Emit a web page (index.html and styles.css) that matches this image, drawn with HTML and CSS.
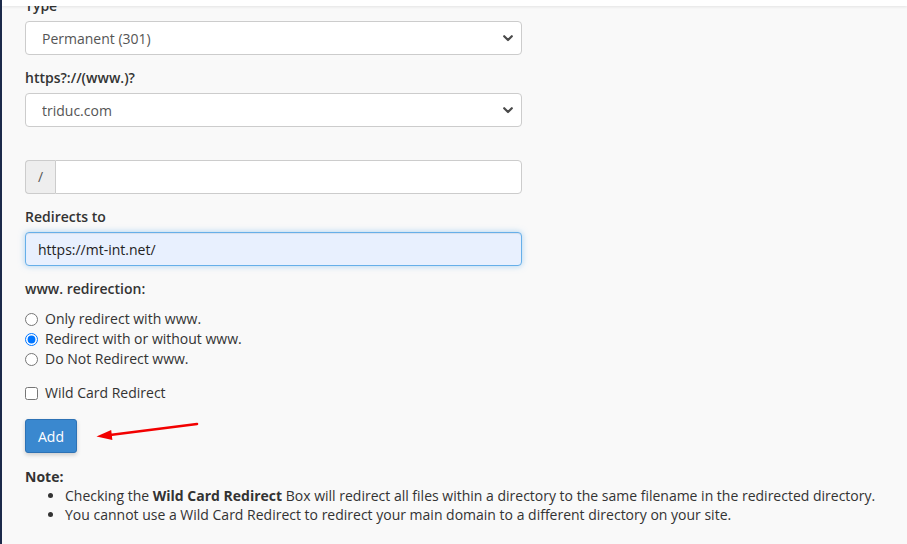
FILE: index.html
```html
<!DOCTYPE html>
<html lang="en">
<head>
<meta charset="utf-8">
<title>Add Redirect</title>
<link rel="stylesheet" href="styles.css">
</head>
<body>
<div class="app">
  <div class="edge"></div>
  <main class="main">
    <div class="topbar"></div>
    <form class="form">
      <div class="group">
        <label class="lbl">Type</label>
        <div class="select-wrap">
          <select class="ctl sel"><option>Permanent (301)</option></select>
          <svg class="chev" width="10" height="7" viewBox="0 0 10 7"><path d="M1.2 1.2 L5 5 L8.8 1.2" fill="none" stroke="#4a4a4a" stroke-width="2.2" stroke-linecap="round" stroke-linejoin="round"/></svg>
        </div>
      </div>
      <div class="group">
        <label class="lbl">https?://(www.)?</label>
        <div class="select-wrap">
          <select class="ctl sel"><option>triduc.com</option></select>
          <svg class="chev" width="10" height="7" viewBox="0 0 10 7"><path d="M1.2 1.2 L5 5 L8.8 1.2" fill="none" stroke="#4a4a4a" stroke-width="2.2" stroke-linecap="round" stroke-linejoin="round"/></svg>
        </div>
      </div>
      <div class="group group-path">
        <div class="input-group">
          <span class="addon">/</span>
          <input class="ctl txt" type="text" value="">
        </div>
      </div>
      <div class="group">
        <label class="lbl">Redirects to</label>
        <input class="ctl txt autofill" type="text" value="https://mt-int.net/">
      </div>
      <div class="group group-radios">
        <label class="lbl lbl-radios">www. redirection:</label>
        <label class="opt"><input type="radio" name="www"> Only redirect with www.</label>
        <label class="opt"><input type="radio" name="www" checked> Redirect with or without www.</label>
        <label class="opt"><input type="radio" name="www"> Do Not Redirect www.</label>
      </div>
      <div class="group group-check">
        <label class="opt"><input type="checkbox"> Wild Card Redirect</label>
      </div>
      <div class="group group-btn">
        <button type="button" class="btn">Add</button>
      </div>
      <div class="note">
        <div class="note-title">Note:</div>
        <ul class="note-list">
          <li>Checking the <strong>Wild Card Redirect</strong> Box will redirect all files within a directory to the same filename in the redirected directory.</li>
          <li>You cannot use a Wild Card Redirect to redirect your main domain to a different directory on your site.</li>
        </ul>
      </div>
    </form>
    <svg class="annot" width="110" height="28" viewBox="92 416 110 28">
      <line x1="197" y1="424" x2="108" y2="435.2" stroke="#f20000" stroke-width="2.6" stroke-linecap="round"/>
      <polygon points="96.5,436.6 111.2,430 112.4,440" fill="#f20000"/>
    </svg>
  </main>
</div>
</body>
</html>
```

FILE: styles.css
```css
html, body {
  margin: 0;
  padding: 0;
  height: 100%;
  overflow: hidden;
}
body {
  font-family: "Open Sans", "Liberation Sans", sans-serif;
  font-size: 14px;
  line-height: 20px;
  color: #333;
  background: #f9f9f9;
}
.app {
  display: flex;
  height: 544px;
}
.edge {
  width: 2px;
  flex: 0 0 2px;
  background: #1c2a4a;
}
.main {
  position: relative;
  flex: 1;
  padding-left: 23px;
  background: #f9f9f9;
  overflow: hidden;
}
.topbar {
  position: absolute;
  left: 0;
  right: 0;
  top: 0;
  height: 6px;
  background: #fff;
  box-shadow: 0 1px 3px rgba(0, 0, 0, 0.09);
  z-index: 2;
}
.form {
  width: 497px;
  margin-top: -4px;
}
.group {
  margin-bottom: 13px;
}
.lbl {
  display: block;
  font-weight: 600;
  line-height: 20px;
  margin-bottom: 5px;
}
.ctl {
  display: block;
  box-sizing: border-box;
  width: 100%;
  height: 34px;
  margin: 0;
  border: 1px solid #ccc;
  border-radius: 4px;
  background: #fff;
  font-family: "Open Sans", "Liberation Sans", sans-serif;
  font-size: 14px;
  color: #555;
  outline: none;
}
.select-wrap {
  position: relative;
}
.sel {
  appearance: none;
  -webkit-appearance: none;
  padding: 0 30px 0 16px;
}
.chev {
  position: absolute;
  right: 9px;
  top: 14px;
  pointer-events: none;
}
.group-path {
  margin-top: 33px;
}
.input-group {
  display: flex;
}
.addon {
  box-sizing: border-box;
  width: 30px;
  height: 34px;
  flex: 0 0 30px;
  border: 1px solid #ccc;
  border-right: 0;
  border-radius: 4px 0 0 4px;
  background: #eee;
  color: #555;
  display: flex;
  align-items: center;
  justify-content: center;
}
.input-group .txt {
  flex: 1;
  border-radius: 0 4px 4px 0;
}
.txt {
  padding: 0 12px;
}
.autofill {
  background: #e8f0fe;
  border-color: #66afe9;
  color: #222;
  box-shadow: inset 0 1px 1px rgba(0, 0, 0, 0.075), 0 0 6px rgba(102, 175, 233, 0.55);
}
.group-radios {
  margin-bottom: 14px;
}
.lbl-radios {
  margin-bottom: 10px;
}
.opt {
  display: flex;
  align-items: center;
  height: 20px;
  line-height: 20px;
  color: #333;
}
.opt input {
  width: 13px;
  height: 13px;
  margin: 0 7px 0 0;
}
.group-check {
  margin-bottom: 16px;
}
.group-btn {
  margin-bottom: 14px;
}
.btn {
  box-sizing: border-box;
  height: 34px;
  padding: 0 12px;
  border: 1px solid #2d72b5;
  border-radius: 3px;
  background: #3a88cf;
  color: #fff;
  font-family: "Open Sans", "Liberation Sans", sans-serif;
  font-size: 14px;
  font-weight: 500;
  box-shadow: 0 2px 4px rgba(0, 0, 0, 0.18);
}
.note {
  line-height: 19px;
  color: #333;
}
.note-title {
  font-weight: 700;
}
.note-list {
  margin: 0;
  padding-left: 40px;
  width: 900px;
}
.note-list strong {
  font-weight: 700;
}
.annot {
  position: absolute;
  left: 90px;
  top: 416px;
  z-index: 3;
}
```
